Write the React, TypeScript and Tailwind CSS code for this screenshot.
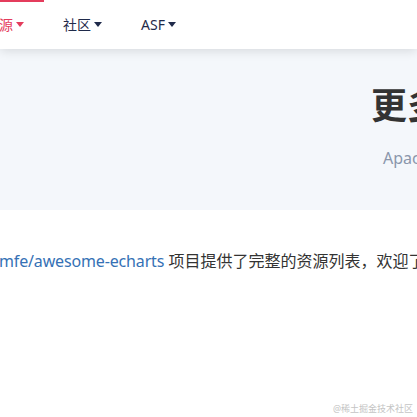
import React from "react";

const font = { fontFamily: '"Noto Sans", "Noto Sans CJK SC", sans-serif' };

function Caret({ color }: { color: string }) {
  return (
    <span
      className="inline-block ml-[3px] align-middle w-0 h-0 border-l-[4px] border-r-[4px] border-t-[5px] border-l-transparent border-r-transparent"
      style={{ borderTopColor: color }}
    />
  );
}

export default function App() {
  return (
    <div className="w-[417px] h-[417px] overflow-hidden bg-white relative" style={font}>
      <nav className="relative z-10 h-[49px] bg-white shadow-[0_2px_10px_rgba(0,0,0,0.12)] flex items-stretch whitespace-nowrap">
        <div className="-ml-[35px] relative flex items-center px-[20px] text-[14px] text-[#e43c5c]">
          <span className="absolute top-0 left-0 right-0 h-[2px] bg-[#e43c5c]" />
          资源
          <Caret color="#e43c5c" />
        </div>
        <div className="-ml-[1px] flex items-center px-[20px] text-[14px] text-[#1f2a4a]">
          社区
          <Caret color="#1f2a4a" />
        </div>
        <div className="-ml-[1px] flex items-center px-[20px] text-[14px] text-[#1f2a4a]">
          ASF
          <Caret color="#1f2a4a" />
        </div>
      </nav>
      <section className="h-[161px] bg-[#f4f7fb] whitespace-nowrap pt-[33px]">
        <h1 className="pl-[371px] text-[36px] leading-[48px] font-bold text-[#333]">更多资源</h1>
        <p className="pl-[383px] mt-[16px] text-[16px] leading-[24px] text-[#8a96ab]">Apache ECharts 相关资源</p>
      </section>
      <div className="pt-[39px] whitespace-nowrap text-[16px] leading-[24px] text-[#333] -ml-[1px]">
        <a className="text-[#3571b5] tracking-[-0.15px]">mfe/awesome-echarts</a> 项目提供了完整的资源列表，欢迎了解更多
      </div>
      <div className="absolute right-[4px] bottom-[2px] text-[9px] text-[#c4c4c4]">@稀土掘金技术社区</div>
    </div>
  );
}
